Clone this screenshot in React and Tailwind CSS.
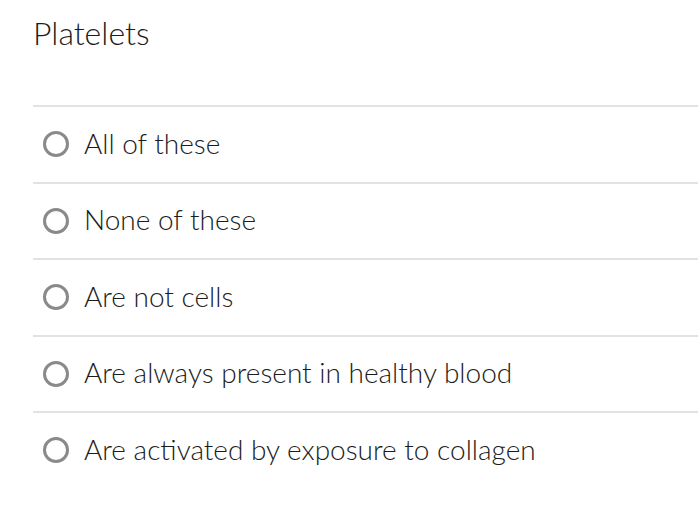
export default function App() {
  const options = [
    "All of these",
    "None of these",
    "Are not cells",
    "Are always present in healthy blood",
    "Are activated by exposure to collagen",
  ];
  return (
    <div className="w-[700px] h-[515px] bg-white" style={{ fontFamily: "Lato, 'Open Sans', sans-serif" }}>
      <div className="ml-[33px] mr-[2px]">
        <div className="h-[105px] pt-[13px] text-[32px] leading-[40px] text-[#1c1c1c] font-light">Platelets</div>
        {options.map((o, i) => (
          <div key={i} className="h-[76.5px] border-t-2 border-[#e2e2e2] flex items-center">
            <div className="ml-[10px] w-[26px] h-[26px] rounded-full border-[3px] border-[#8a8a8a] shrink-0" />
            <div className="ml-[15px] -mt-[3px] text-[28px] leading-[34px] text-[#1c1c1c] font-light">{o}</div>
          </div>
        ))}
      </div>
    </div>
  );
}
